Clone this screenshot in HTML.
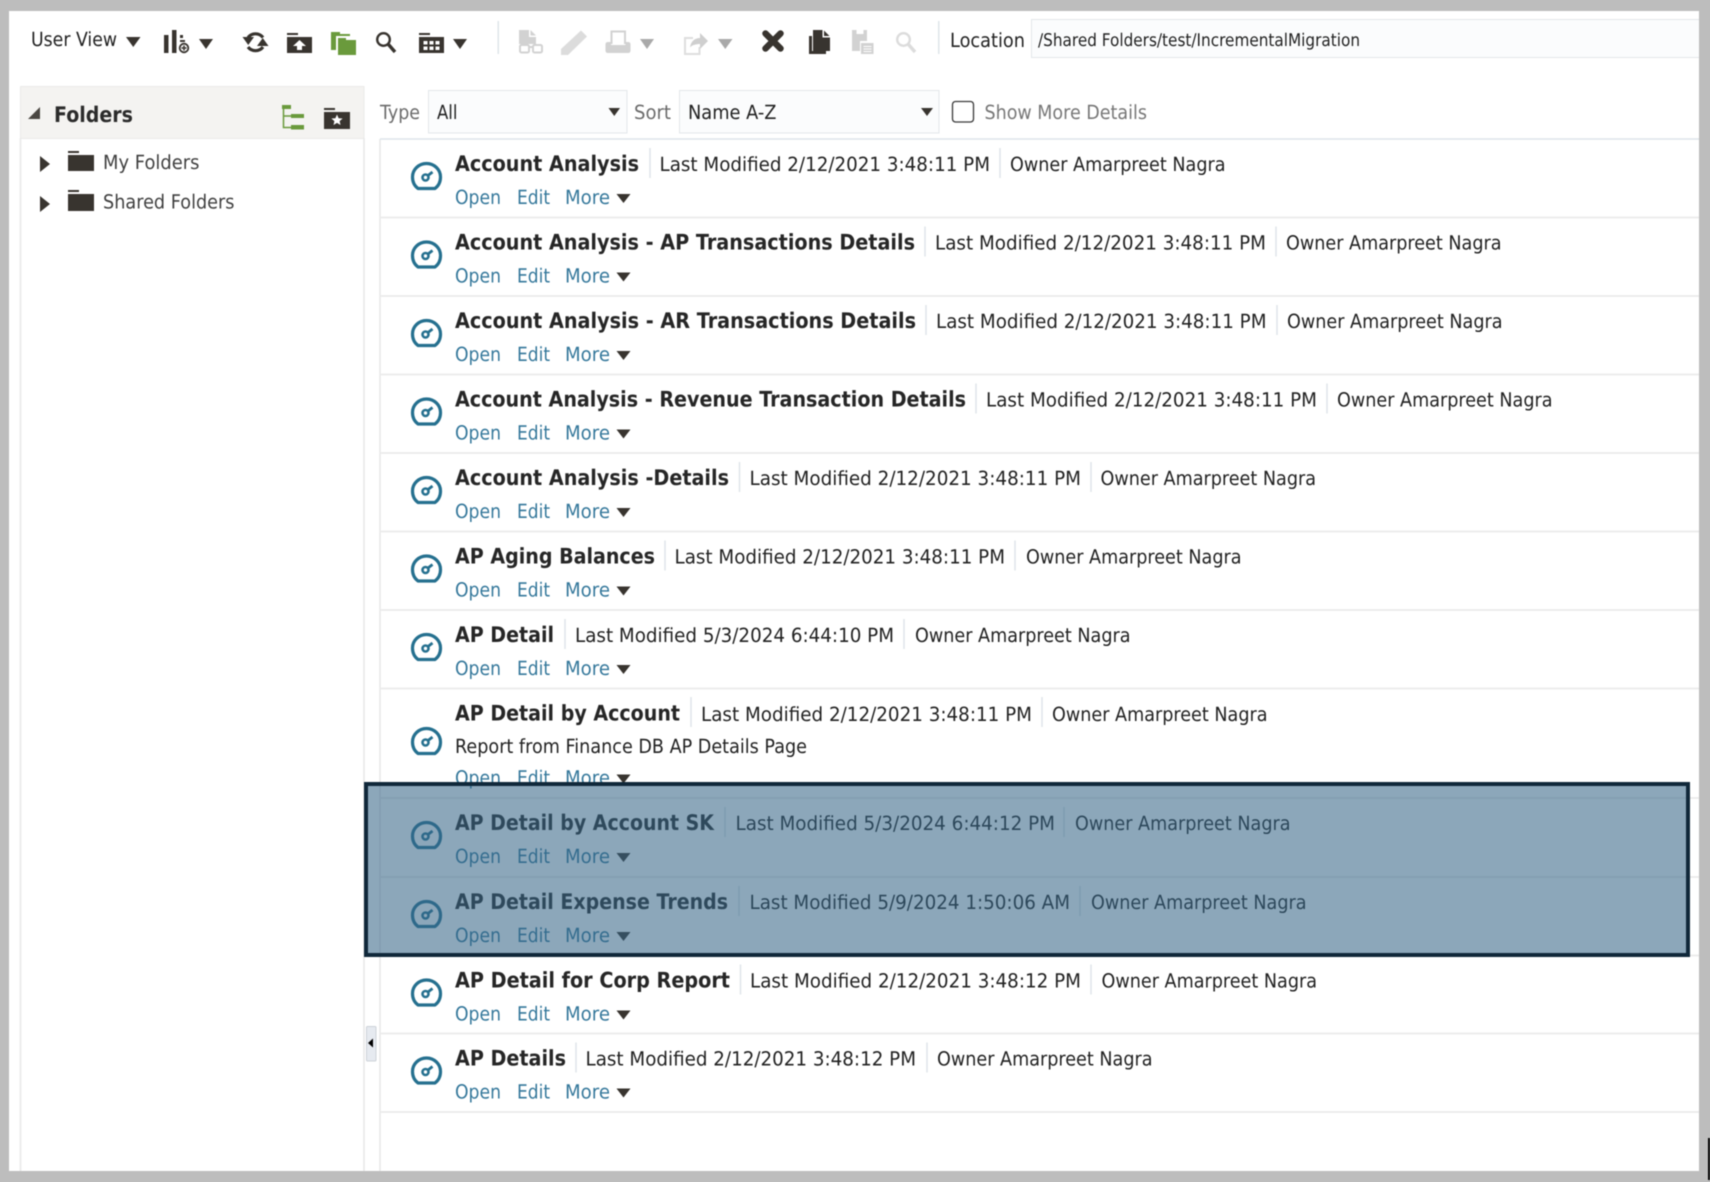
<!DOCTYPE html>
<html lang="en"><head><meta charset="utf-8"><title>Catalog</title>
<style>
html,body{margin:0;padding:0;background:#bdbdbd;width:1710px;height:1182px;overflow:hidden}
svg{display:block;filter:blur(.45px)}
text{font-family:"DejaVu Sans","Liberation Sans",sans-serif;text-rendering:geometricPrecision;fill:#222}
.t{font-size:21.5px;font-weight:700;fill:#262626}
.m{font-size:19.5px}
.l{font-size:19.5px;fill:#35789b}
.g{font-size:19.5px;fill:#6b6b6b}
.d{fill:#38342f}
</style></head><body>
<svg xmlns="http://www.w3.org/2000/svg" width="1710" height="1182" viewBox="0 0 1710 1182">
<defs>
<symbol id="gauge" viewBox="0 0 31 28" width="31" height="28" overflow="visible">
<path d="M7 26.500C3 23.500 1.500 19 1.500 15A14 13.500 0 0 1 29.500 15C29.500 19 28 23.500 24 26.500Z" fill="none" stroke="#25708f" stroke-width="3.200" stroke-linejoin="round"/>
<circle cx="14.500" cy="15.500" r="3" fill="none" stroke="#25708f" stroke-width="2.600"/>
<path d="M17 13.500L21.500 10" stroke="#25708f" stroke-width="2.800"/>
</symbol>
<g id="links">
<text class="l" x="455" y="65" textLength="46" lengthAdjust="spacingAndGlyphs">Open</text>
<text class="l" x="517" y="65" textLength="33" lengthAdjust="spacingAndGlyphs">Edit</text>
<text class="l" x="565" y="65" textLength="45" lengthAdjust="spacingAndGlyphs">More</text>
<path class="d" d="M616.500 55h14l-7 9z"/>
</g>
<clipPath id="c8"><rect x="380" y="688" width="1320" height="102"/></clipPath>
</defs>
<rect width="1710" height="1182" fill="#fff"/>

<!-- toolbar -->
<text x="31" y="46" class="m" fill="#333" textLength="86" lengthAdjust="spacingAndGlyphs">User View</text>
<path class="d" d="M126 37h14.500l-7.250 10z"/>
<path class="d" d="M164 35h4.500v18H164zM172 30h4.500v23H172zM180 35h3v3h-3zM180 40h5v2h-5z"/>
<circle cx="184" cy="48" r="4.300" fill="#fff" stroke="#38342f" stroke-width="1.800"/><path d="M184 45.500v5M181.500 48h5" stroke="#38342f" stroke-width="1.500"/>
<path class="d" d="M199 39h14l-7 10z"/>
<path d="M263 37.500A9.500 9.500 0 0 0 248 37.500" fill="none" stroke="#38342f" stroke-width="3.200"/>
<path class="d" d="M242.500 37h11.500l-5.750 8z"/>
<path d="M248 47A9.500 9.500 0 0 0 263 47" fill="none" stroke="#38342f" stroke-width="3.200"/>
<path class="d" d="M257 46h11.500l-5.750-8z"/>
<path class="d" d="M287 33h11v2h-11zM287 37h25v16h-25z"/><path fill="#fff" d="M299.500 40l6.500 6h-4v4h-5v-4h-4z"/>
<path fill="#6a9a3c" d="M331 32h9v2h10v2H336v14h-5zM338 38h8v2h10v15h-18z"/>
<circle cx="383.500" cy="39.500" r="6.300" fill="none" stroke="#38342f" stroke-width="2.400"/><path d="M388.500 44.500L395 52" stroke="#38342f" stroke-width="3.400"/>
<path class="d" d="M419 33h11v2h-11zM419 37h25v16h-25z"/>
<path fill="#fff" d="M423.500 41h4v3.500h-4zM429.500 41h4v3.500h-4zM435.500 41h4v3.500h-4zM423.500 46.500h4v3.500h-4zM429.500 46.500h4v3.500h-4zM435.500 46.500h4v3.500h-4z"/>
<path class="d" d="M453 39h14l-7 10z"/>
<rect x="497.500" y="21" width="1.500" height="33" fill="#dfe5ea"/>

<path fill="#d2d2d2" d="M519 30h10v7h7v7H519zM530.500 30l5.500 5.500h-5.500z"/><rect x="520" y="45" width="9" height="7.500" rx="1.500" fill="none" stroke="#d2d2d2" stroke-width="2"/><rect x="533" y="45" width="9" height="7.500" rx="1.500" fill="none" stroke="#d2d2d2" stroke-width="2"/><path d="M529 47h4" stroke="#d2d2d2" stroke-width="2"/>
<path fill="#dcdcdc" d="M581 30.500L587 36.500L568 55L561 55L561 49Z"/>
<path d="M611.500 44V31.500H625V44" fill="none" stroke="#d2d2d2" stroke-width="2"/><path fill="#d2d2d2" d="M608 42h3v3h14.500v-3h2.500q2.500 0 2.500 2.500v6q0 2.500-2.500 2.500h-20q-2.500 0-2.500-2.500v-6q0-2.500 2.500-2.500z"/>
<path fill="#a9a9a9" d="M640 39h14l-7 10z"/>
<path d="M699.500 47v7H685V38h8" fill="none" stroke="#dedede" stroke-width="2"/><path fill="#cfcfcf" d="M690 47.500C691 41 695 38 700 38v-5l8 8-8 8v-5c-4 0-8 1-10 3.500z"/>
<path fill="#a9a9a9" d="M718 39h14.500l-7.250 10z"/>
<path d="M765.500 33.500L780.500 48.500M780.500 33.500L765.500 48.500" stroke="#38342f" stroke-width="6.500" stroke-linecap="round"/>
<path class="d" d="M809 36h3v15h14v3H809z"/><path class="d" d="M813 30h9.500v7.500h7.500V51H813zM824 30.500l5.500 5.500H824z"/>
<path fill="#d2d2d2" d="M852 30h4.500v4h7v-4h3.500v11H860v10H852z"/><path fill="#d2d2d2" d="M861 43h12.500v11H861z"/><path d="M863.500 46.500h8M863.500 49h8M863.500 51.500h8" stroke="#fff" stroke-width="1"/>
<circle cx="903.500" cy="39.500" r="6.300" fill="none" stroke="#dcdcdc" stroke-width="2.400"/><path d="M908.500 44.500L915 52" stroke="#dcdcdc" stroke-width="3.400"/>
<rect x="938" y="21" width="1.500" height="33" fill="#dfe5ea"/>
<text x="950" y="47" class="m" textLength="75" lengthAdjust="spacingAndGlyphs">Location</text>
<rect x="1031.500" y="19.500" width="680" height="38" fill="#fbfcfd" stroke="#e3e7ea"/>
<text x="1038" y="46" font-size="17.500" textLength="322" lengthAdjust="spacingAndGlyphs">/Shared Folders/test/IncrementalMigration</text>

<!-- folders panel -->
<rect x="20.500" y="86.500" width="343.500" height="52" fill="#f4f3f1" stroke="#ebebe9"/>
<path d="M20.500 138V1171M364 138V1171" stroke="#e8e8e8" stroke-width="1.500"/>
<path fill="#4a4742" d="M40 107v12H28z"/>
<text x="54" y="122" class="t" style="fill:#2b2b2b" textLength="79" lengthAdjust="spacingAndGlyphs">Folders</text>
<path fill="#6a9a3c" d="M282 105h9v4h-9zM291 114h13v4h-13zM291 125h13v4.500h-13z"/><path d="M283.500 109V127.500H291M283.500 116H291" fill="none" stroke="#6a9a3c" stroke-width="1.500"/>
<path class="d" d="M324 108h11v2h-11zM324 112h26v17h-26z"/><path fill="#fff" d="M337 114.500l1.600 3.700 4 .3-3 2.600.9 3.900-3.500-2.100-3.500 2.100.9-3.900-3-2.600 4-.3z"/>
<path class="d" d="M40 156l10 8-10 8zM40 196l10 8-10 8z"/>
<path class="d" d="M68 151h11v2H68zM68 155h26v16H68zM68 190h11v2H68zM68 194h26v17H68z"/>
<text x="103" y="169" class="m" style="fill:#404040" textLength="96.500" lengthAdjust="spacingAndGlyphs">My Folders</text>
<text x="103" y="208.500" class="m" style="fill:#404040" textLength="131.500" lengthAdjust="spacingAndGlyphs">Shared Folders</text>
<rect x="366.500" y="1026.500" width="9.500" height="34.500" rx="1" fill="#e6eaf0" stroke="#cdd2d8"/>
<path fill="#000" d="M373 1038.500v9l-5-4.500z"/>

<!-- filter bar -->
<text x="380" y="119" class="g" textLength="40" lengthAdjust="spacingAndGlyphs">Type</text>
<rect x="428.500" y="90.500" width="198.500" height="42.500" fill="#fbfcfd" stroke="#e3e7ea"/>
<text x="437" y="119" class="m" textLength="20.500" lengthAdjust="spacingAndGlyphs">All</text>
<path class="d" d="M608.500 108h11.500l-5.750 8z"/>
<text x="634" y="119" class="g" textLength="37" lengthAdjust="spacingAndGlyphs">Sort</text>
<rect x="679.500" y="90.500" width="259.500" height="42.500" fill="#fbfcfd" stroke="#e3e7ea"/>
<text x="688" y="119" class="m" textLength="88.500" lengthAdjust="spacingAndGlyphs">Name A-Z</text>
<path class="d" d="M921 108h12l-6 8z"/>
<rect x="952.500" y="101.500" width="21" height="20.500" rx="3" fill="#fff" stroke="#3a3a3a" stroke-width="1.300"/>
<text x="984.500" y="119" class="g" style="fill:#777" textLength="162.500" lengthAdjust="spacingAndGlyphs">Show More Details</text>

<!-- list frame -->
<path d="M380 139V1171" stroke="#e8e8e8" stroke-width="1.500"/>
<path d="M380 139H1699" stroke="#dde5ea" stroke-width="1.500"/>
<path d="M380 217.500H1699M380 296H1699M380 374.500H1699M380 453H1699M380 531.500H1699M380 610H1699M380 688.500H1699M380 798H1699M380 877H1699M380 955.500H1699M380 1033.500H1699M380 1112H1699" stroke="#ebebeb" stroke-width="1.800"/>

<!-- rows -->
<g transform="translate(0,139)"><use href="#gauge" x="411" y="23"/>
<text class="t" x="455" y="32" textLength="184" lengthAdjust="spacingAndGlyphs">Account Analysis</text><path d="M650 9V39M1000 9V39" stroke="#dfe5ea" stroke-width="1.500"/>
<text class="m" x="659.500" y="32" textLength="330.500" lengthAdjust="spacingAndGlyphs">Last Modified 2/12/2021 3:48:11 PM</text>
<text class="m" x="1010" y="32" textLength="215.500" lengthAdjust="spacingAndGlyphs">Owner Amarpreet Nagra</text><use href="#links"/></g>

<g transform="translate(0,217.500)"><use href="#gauge" x="411" y="23"/>
<text class="t" x="455" y="32" textLength="460" lengthAdjust="spacingAndGlyphs">Account Analysis - AP Transactions Details</text><path d="M925 9V39M1276 9V39" stroke="#dfe5ea" stroke-width="1.500"/>
<text class="m" x="935" y="32" textLength="331" lengthAdjust="spacingAndGlyphs">Last Modified 2/12/2021 3:48:11 PM</text>
<text class="m" x="1286" y="32" textLength="215.500" lengthAdjust="spacingAndGlyphs">Owner Amarpreet Nagra</text><use href="#links"/></g>

<g transform="translate(0,296)"><use href="#gauge" x="411" y="23"/>
<text class="t" x="455" y="32" textLength="461" lengthAdjust="spacingAndGlyphs">Account Analysis - AR Transactions Details</text><path d="M926 9V39M1277 9V39" stroke="#dfe5ea" stroke-width="1.500"/>
<text class="m" x="936" y="32" textLength="330.500" lengthAdjust="spacingAndGlyphs">Last Modified 2/12/2021 3:48:11 PM</text>
<text class="m" x="1287" y="32" textLength="215.500" lengthAdjust="spacingAndGlyphs">Owner Amarpreet Nagra</text><use href="#links"/></g>

<g transform="translate(0,374.500)"><use href="#gauge" x="411" y="23"/>
<text class="t" x="455" y="32" textLength="511" lengthAdjust="spacingAndGlyphs">Account Analysis - Revenue Transaction Details</text><path d="M976 9V39M1327 9V39" stroke="#dfe5ea" stroke-width="1.500"/>
<text class="m" x="986" y="32" textLength="331" lengthAdjust="spacingAndGlyphs">Last Modified 2/12/2021 3:48:11 PM</text>
<text class="m" x="1337" y="32" textLength="215.500" lengthAdjust="spacingAndGlyphs">Owner Amarpreet Nagra</text><use href="#links"/></g>

<g transform="translate(0,453)"><use href="#gauge" x="411" y="23"/>
<text class="t" x="455" y="32" textLength="274" lengthAdjust="spacingAndGlyphs">Account Analysis -Details</text><path d="M739.500 9V39M1091 9V39" stroke="#dfe5ea" stroke-width="1.500"/>
<text class="m" x="749.500" y="32" textLength="331.500" lengthAdjust="spacingAndGlyphs">Last Modified 2/12/2021 3:48:11 PM</text>
<text class="m" x="1100.500" y="32" textLength="215.500" lengthAdjust="spacingAndGlyphs">Owner Amarpreet Nagra</text><use href="#links"/></g>

<g transform="translate(0,531.500)"><use href="#gauge" x="411" y="23"/>
<text class="t" x="455" y="32" textLength="200" lengthAdjust="spacingAndGlyphs">AP Aging Balances</text><path d="M665 9V39M1015 9V39" stroke="#dfe5ea" stroke-width="1.500"/>
<text class="m" x="674.500" y="32" textLength="330.500" lengthAdjust="spacingAndGlyphs">Last Modified 2/12/2021 3:48:11 PM</text>
<text class="m" x="1026" y="32" textLength="215.500" lengthAdjust="spacingAndGlyphs">Owner Amarpreet Nagra</text><use href="#links"/></g>

<g transform="translate(0,610)"><use href="#gauge" x="411" y="23"/>
<text class="t" x="455" y="32" textLength="99" lengthAdjust="spacingAndGlyphs">AP Detail</text><path d="M565 9V39M904 9V39" stroke="#dfe5ea" stroke-width="1.500"/>
<text class="m" x="575" y="32" textLength="319" lengthAdjust="spacingAndGlyphs">Last Modified 5/3/2024 6:44:10 PM</text>
<text class="m" x="915" y="32" textLength="215.500" lengthAdjust="spacingAndGlyphs">Owner Amarpreet Nagra</text><use href="#links"/></g>

<g transform="translate(0,688)"><use href="#gauge" x="411" y="39"/>
<text class="t" x="455" y="32.500" textLength="225" lengthAdjust="spacingAndGlyphs">AP Detail by Account</text><path d="M691 9V39M1042 9V39" stroke="#dfe5ea" stroke-width="1.500"/>
<text class="m" x="701" y="33" textLength="331" lengthAdjust="spacingAndGlyphs">Last Modified 2/12/2021 3:48:11 PM</text>
<text class="m" x="1052" y="33" textLength="215.500" lengthAdjust="spacingAndGlyphs">Owner Amarpreet Nagra</text>
<text class="m" x="455" y="65" textLength="352" lengthAdjust="spacingAndGlyphs">Report from Finance DB AP Details Page</text></g>
<g clip-path="url(#c8)"><g transform="translate(0,719.500)"><use href="#links"/></g></g>

<g transform="translate(0,798)"><use href="#gauge" x="411" y="23"/>
<text class="t" x="455" y="32" textLength="259" lengthAdjust="spacingAndGlyphs">AP Detail by Account SK</text><path d="M725 9V39M1064 9V39" stroke="#dfe5ea" stroke-width="1.500"/>
<text class="m" x="735.500" y="32" textLength="319.500" lengthAdjust="spacingAndGlyphs">Last Modified 5/3/2024 6:44:12 PM</text>
<text class="m" x="1075" y="32" textLength="215.500" lengthAdjust="spacingAndGlyphs">Owner Amarpreet Nagra</text><use href="#links"/></g>

<g transform="translate(0,877)"><use href="#gauge" x="411" y="23"/>
<text class="t" x="455" y="32" textLength="273" lengthAdjust="spacingAndGlyphs">AP Detail Expense Trends</text><path d="M739 9V39M1080 9V39" stroke="#dfe5ea" stroke-width="1.500"/>
<text class="m" x="749.500" y="32" textLength="320.500" lengthAdjust="spacingAndGlyphs">Last Modified 5/9/2024 1:50:06 AM</text>
<text class="m" x="1091" y="32" textLength="215.500" lengthAdjust="spacingAndGlyphs">Owner Amarpreet Nagra</text><use href="#links"/></g>

<g transform="translate(0,955.500)"><use href="#gauge" x="411" y="23"/>
<text class="t" x="455" y="32" textLength="275" lengthAdjust="spacingAndGlyphs">AP Detail for Corp Report</text><path d="M740.500 9V39M1091 9V39" stroke="#dfe5ea" stroke-width="1.500"/>
<text class="m" x="750" y="32" textLength="331" lengthAdjust="spacingAndGlyphs">Last Modified 2/12/2021 3:48:12 PM</text>
<text class="m" x="1101.500" y="32" textLength="215.500" lengthAdjust="spacingAndGlyphs">Owner Amarpreet Nagra</text><use href="#links"/></g>

<g transform="translate(0,1033.500)"><use href="#gauge" x="411" y="23"/>
<text class="t" x="455" y="32" textLength="111" lengthAdjust="spacingAndGlyphs">AP Details</text><path d="M576 9V39M927 9V39" stroke="#dfe5ea" stroke-width="1.500"/>
<text class="m" x="585.500" y="32" textLength="330.500" lengthAdjust="spacingAndGlyphs">Last Modified 2/12/2021 3:48:12 PM</text>
<text class="m" x="937" y="32" textLength="215.500" lengthAdjust="spacingAndGlyphs">Owner Amarpreet Nagra</text><use href="#links"/></g>

<!-- highlight overlay -->
<rect x="366" y="784" width="1322" height="171" fill="rgb(53,100,133)" fill-opacity=".57" stroke="#10283a" stroke-width="4"/>

<!-- frame -->
<path fill="#bdbdbd" d="M0 0H1710V1182H0ZM9 11V1171H1699V11Z" fill-rule="evenodd"/>
<rect x="1708" y="1138" width="2" height="42" fill="#000"/>
</svg>
</body></html>
